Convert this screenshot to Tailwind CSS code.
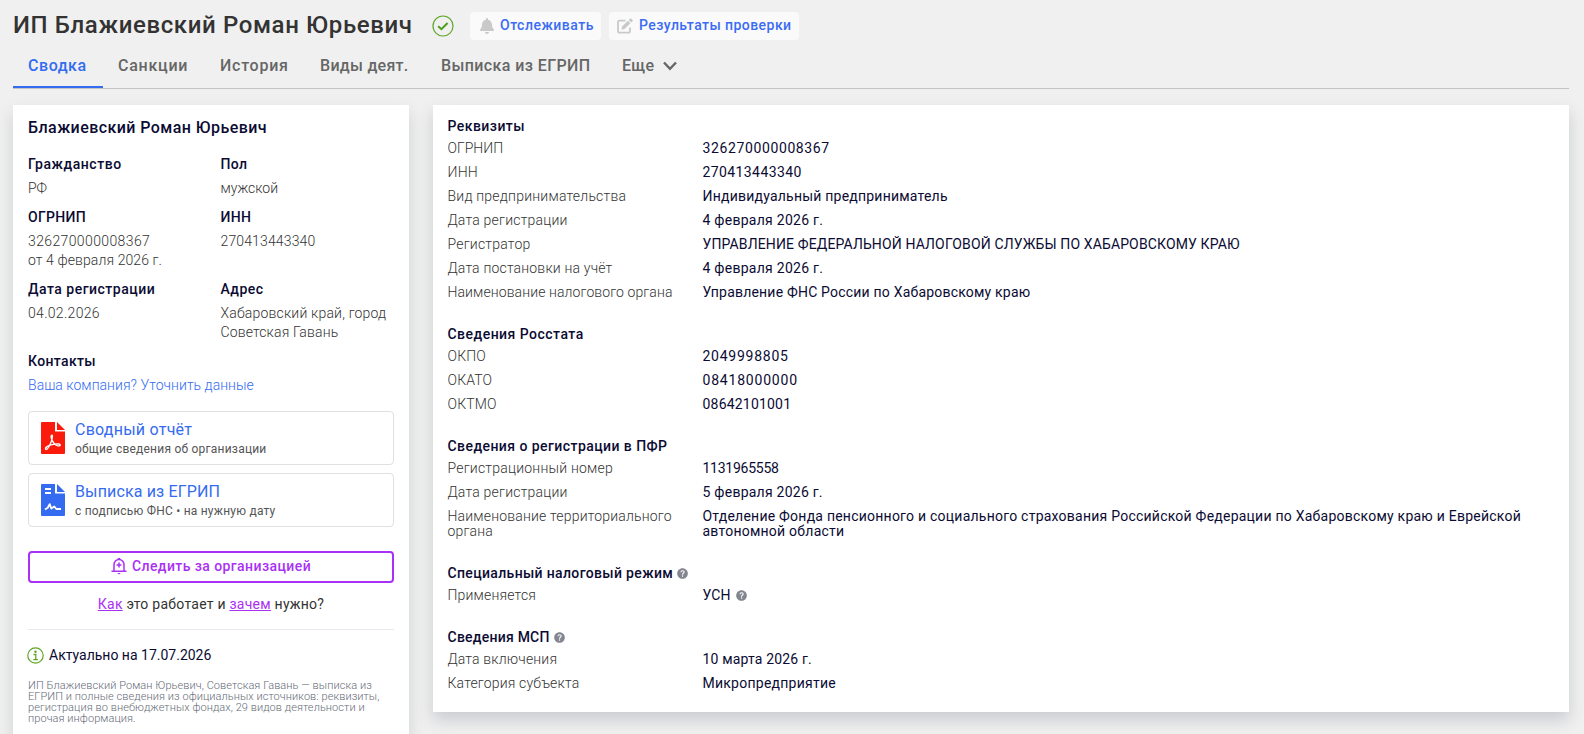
<!DOCTYPE html>
<html lang="ru">

<head>
    <meta charset="UTF-8">
    <title>ИП Блажиевский Роман Юрьевич</title>
    <script src="https://cdn.jsdelivr.net/npm/@tailwindcss/browser@4"></script>
</head>

<body class="h-screen overflow-hidden bg-[#f0f0f0] pl-[13px] pr-[15px] font-['Roboto',sans-serif] text-sm text-[#0b0b33]">
    <svg class="hidden">
        <symbol id="help" viewBox="0 0 512 512">
            <path fill="#838691" d="M504 256c0 137-111 248-248 248S8 393 8 256 119 8 256 8s248 111 248 248z" />
            <path fill="none" stroke="#fff" stroke-width="48" d="M180 196c8-50 36-72 78-72 46 0 78 28 78 66 0 56-78 56-78 110v14" />
            <circle cx="258" cy="376" r="34" fill="#fff" />
        </symbol>
    </svg>

    <header class="flex h-[51px] items-center">
        <h1 class="w-[419px] pb-0.5 text-2xl font-medium tracking-[0.62px] whitespace-nowrap text-[#333]">ИП Блажиевский Роман Юрьевич</h1>
        <svg class="size-[22px] shrink-0" viewBox="0 0 22 22" fill="none">
            <circle cx="11" cy="11" r="10" stroke="#5fa626" stroke-width="1.2" />
            <path d="M6.2 11.2l3.2 3L15.6 8" stroke="#4f9d1a" stroke-width="2" />
        </svg>
        <button class="ml-4 flex h-7 w-[131px] shrink-0 items-center rounded bg-[#fafafa] pl-2.5 font-medium tracking-[0.5px] whitespace-nowrap text-[#3a6cf4]">
            <svg class="mr-1.5 h-4 w-3.5" viewBox="0 0 448 512" fill="#c9c9c9">
                <path d="M224 512c35.300 0 63.900-28.700 63.900-64H160.100c0 35.300 28.600 64 63.900 64zm215.400-149.700c-19.300-20.800-55.500-52-55.500-154.300 0-77.700-54.500-139.900-127.900-155.200V32c0-17.700-14.300-32-32-32s-32 14.300-32 32v20.800C118.600 68.100 64.100 130.300 64.100 208c0 102.300-36.200 133.500-55.500 154.300-6 6.400-8.700 14.200-8.600 21.700.1 16.400 13 32 32.100 32h383.800c19.100 0 32-15.600 32.100-32 .1-7.500-2.600-15.300-8.600-21.700z" />
            </svg>
            <span class="pb-px">Отслеживать</span>
        </button>
        <button class="ml-2 flex h-7 w-[190px] shrink-0 items-center rounded bg-[#fafafa] pl-2 font-medium tracking-[0.45px] whitespace-nowrap text-[#3a6cf4]">
            <svg class="mr-1.5 size-4" viewBox="0 0 16 16" fill="none">
                <path d="M8.500 2.700H2.400a1.400 1.400 0 0 0-1.400 1.400v9.200a1.400 1.400 0 0 0 1.400 1.400h9.200a1.400 1.400 0 0 0 1.400-1.400V9.500" stroke="#c9c9c9" stroke-width="1.800" />
                <path d="M5 8.600L10.900 2.700l2.500 2.500L7.500 11.100l-3 .6zM11.700 1.900l1.100-1.100a1.100 1.100 0 0 1 1.600 0l1 1a1.100 1.100 0 0 1 0 1.600l-1.200 1.100z" fill="#c9c9c9" />
            </svg>
            <span class="pb-px">Результаты проверки</span>
        </button>
    </header>

    <nav class="flex h-[38px] border-b border-[#c4c4c4] text-base leading-[29px] font-medium whitespace-nowrap text-[#666]">
        <a class="w-[90px] border-b-2 border-[#346bf1] pl-[15px] tracking-[0.55px] text-[#346bf1]">Сводка</a>
        <a class="w-[102px] pl-[15px] tracking-[0.75px]">Санкции</a>
        <a class="w-[100px] pl-[15px] tracking-[0.75px]">История</a>
        <a class="w-[121px] pl-[15px] tracking-[0.28px]">Виды деят.</a>
        <a class="w-[181px] pl-[15px] tracking-[0.4px]">Выписка из ЕГРИП</a>
        <a class="flex pl-[15px] tracking-[0.3px]">Еще
            <svg class="mt-2.5 ml-[9px] h-2.5 w-3.5" viewBox="0 0 14 10" fill="none" stroke="#666" stroke-width="2.400">
                <path d="M1 1.500L7 7.800L13 1.500" />
            </svg>
        </a>
    </nav>

    <main class="mt-4 flex h-[629px] items-start gap-6">
        <aside class="h-full w-[396px] shrink-0 bg-white px-[15px] pt-3.5 shadow-[0_8px_15px_rgba(50,60,80,0.17)]">
            <h2 class="text-base leading-[18px] font-medium tracking-[0.43px]">Блажиевский Роман Юрьевич</h2>

            <dl class="mt-[18px] grid grid-cols-[192.500px_1fr] leading-[19px] font-light whitespace-nowrap text-[#333]">
                <div class="h-[53px]">
                    <dt class="mb-[5px] font-medium tracking-[0.55px] text-[#0b0b33]">Гражданство</dt>
                    <dd>РФ</dd>
                </div>
                <div>
                    <dt class="mb-[5px] font-medium tracking-[0.4px] text-[#0b0b33]">Пол</dt>
                    <dd>мужской</dd>
                </div>
                <div class="h-[72px]">
                    <dt class="mb-[5px] font-medium tracking-[0.3px] text-[#0b0b33]">ОГРНИП</dt>
                    <dd class="tracking-[0.38px]">326270000008367</dd>
                    <dd class="tracking-[0.1px]">от 4 февраля 2026 г.</dd>
                </div>
                <div>
                    <dt class="mb-[5px] font-medium tracking-[0.35px] text-[#0b0b33]">ИНН</dt>
                    <dd class="tracking-[0.14px]">270413443340</dd>
                </div>
                <div class="h-[72px]">
                    <dt class="mb-[5px] font-medium tracking-[0.5px] text-[#0b0b33]">Дата регистрации</dt>
                    <dd class="tracking-[0.3px]">04.02.2026</dd>
                </div>
                <div>
                    <dt class="mb-[5px] font-medium tracking-[0.5px] text-[#0b0b33]">Адрес</dt>
                    <dd class="tracking-[0.18px]">Хабаровский край, город</dd>
                    <dd class="tracking-[0.14px]">Советская Гавань</dd>
                </div>
                <div class="h-[59px]">
                    <dt class="mb-[5px] font-medium tracking-[0.35px] text-[#0b0b33]">Контакты</dt>
                    <dd class="tracking-[0.04px] text-[#346bf1]">Ваша компания? Уточнить данные</dd>
                </div>
            </dl>

            <div class="flex flex-col gap-2">
                <a class="flex h-[54px] items-center rounded border border-[#dfe0e2] pl-3">
                    <svg class="mr-2.5 h-8 w-6" viewBox="0 0 24 32">
                        <path fill="#fb1b0c" d="M1 0H14V9.500H24V31a1 1 0 0 1-1 1H1a1 1 0 0 1-1-1V1a1 1 0 0 1 1-1zM16 0l8 8h-8z" />
                        <path fill="none" stroke="#fff" stroke-width="1.400" stroke-linejoin="round" d="M11 13.200c-1.200 0-1 2.200-.2 4.200 1.200 3 3.200 5.400 5.600 6.200 1.600.5 2.800.1 2.800-.6 0-1-2.400-1.300-5.200-.9-3.400.4-7 1.600-8.600 3-1 .9-1.200 2-.5 2.300 1.100.4 3.300-3 4.700-6.200 1.500-3.200 2.300-8 1.400-8z" />
                    </svg>
                    <div class="pt-0.5">
                        <div class="text-base leading-5 tracking-[0.24px] text-[#346bf1]">Сводный отчёт</div>
                        <div class="text-xs leading-[18px] tracking-[0.22px] text-[#555]">общие сведения об организации</div>
                    </div>
                </a>
                <a class="flex h-[54px] items-center rounded border border-[#dfe0e2] pl-3">
                    <svg class="mr-2.5 h-8 w-6" viewBox="0 0 24 32">
                        <path fill="#346bf1" d="M1 0H14V9.500H24V31a1 1 0 0 1-1 1H1a1 1 0 0 1-1-1V1a1 1 0 0 1 1-1zM16 0l8 8h-8z" />
                        <path fill="#fff" d="M4 4h6v2H4zM4 8h6v2H4z" />
                        <path fill="none" stroke="#fff" stroke-width="1.900" stroke-linejoin="round" d="M4 25.500L6.700 23.800 8.700 20.200l1.600 4.300 3-2 2 2.500H20" />
                    </svg>
                    <div class="pt-0.5">
                        <div class="text-base leading-5 tracking-[0.14px] text-[#346bf1]">Выписка из ЕГРИП</div>
                        <div class="text-xs leading-[18px] tracking-[0.22px] text-[#555]">с подписью ФНС • на нужную дату</div>
                    </div>
                </a>
            </div>

            <button class="mt-6 flex h-8 w-full items-center justify-center rounded border-2 border-[#a931f5] pb-0.5 font-medium tracking-[0.42px] text-[#a931f5]">
                <svg class="mr-[5px] h-[18px] w-4" viewBox="0 0 16 18" fill="none" stroke="#a931f5" stroke-width="1.500">
                    <path d="M.500 14.200h15M3 14V7.500a5 5 0 0 1 10 0V14M8 5.500v5M5.500 8h5" />
                    <path d="M6.500 2.300a1.500 1.500 0 0 1 3 0zM6.300 16h3.400L8 17.500z" fill="#a931f5" stroke="none" />
                </svg>
                Следить за организацией
            </button>

            <p class="mt-[11px] text-center leading-5 tracking-[0.25px] text-[#333]"><a class="text-[#a931f5] underline">Как</a> это работает и <a class="text-[#a931f5] underline">зачем</a> нужно?</p>

            <div class="mt-[15px] flex items-center border-t border-[#e9e9f2] pt-4 leading-[18px]">
                <svg class="-ml-px mr-[5px] size-[17px]" viewBox="0 0 17 17" fill="none">
                    <circle cx="8.500" cy="8.500" r="7.700" stroke="#5fa626" stroke-width="1.200" />
                    <path d="M6.500 7.500h2.300v5M6.300 12.700h4.600" stroke="#5fa626" stroke-width="1.300" />
                    <circle cx="8.500" cy="4.700" r="1.200" fill="#5fa626" />
                </svg>
                <span>Актуально на 17.07.2026</span>
            </div>

            <p class="mt-4 text-[11px] leading-[11px] font-light tracking-[0.07px] whitespace-nowrap text-[#666c78]">
                ИП Блажиевский Роман Юрьевич, Советская Гавань — выписка из<br>
                ЕГРИП и полные сведения из официальных источников: реквизиты,<br>
                регистрация во внебюджетных фондах, 29 видов деятельности и<br>
                прочая информация.
            </p>
        </aside>

        <section class="flex h-[607px] grow flex-col gap-[22px] bg-white pt-3.5 pr-[15px] pl-[14.500px] leading-[15px] shadow-[0_8px_15px_rgba(50,60,80,0.2)]">
            <div>
                <h3 class="mb-[3px] font-medium tracking-[0.45px]">Реквизиты</h3>
                <dl class="grid grid-cols-[255px_1fr] gap-y-[9px] pt-1 tracking-[0.22px] [&>dt]:font-light [&>dt]:text-[#333]">
                    <dt class="tracking-normal">ОГРНИП</dt>
                    <dd class="tracking-[0.62px]">326270000008367</dd>
                    <dt>ИНН</dt>
                    <dd class="tracking-[0.4px]">270413443340</dd>
                    <dt>Вид предпринимательства</dt>
                    <dd>Индивидуальный предприниматель</dd>
                    <dt>Дата регистрации</dt>
                    <dd class="tracking-[0.26px]">4 февраля 2026 г.</dd>
                    <dt>Регистратор</dt>
                    <dd class="tracking-[0.13px]">УПРАВЛЕНИЕ ФЕДЕРАЛЬНОЙ НАЛОГОВОЙ СЛУЖБЫ ПО ХАБАРОВСКОМУ КРАЮ</dd>
                    <dt class="tracking-[0.18px]">Дата постановки на учёт</dt>
                    <dd class="tracking-[0.26px]">4 февраля 2026 г.</dd>
                    <dt class="tracking-[0.1px]">Наименование налогового органа</dt>
                    <dd class="tracking-[0.2px]">Управление ФНС России по Хабаровскому краю</dd>
                </dl>
            </div>
            <div class="mt-[5px]">
                <h3 class="mb-[3px] font-medium tracking-[0.48px]">Сведения Росстата</h3>
                <dl class="grid grid-cols-[255px_1fr] gap-y-[9px] pt-1 tracking-[0.15px] [&>dt]:font-light [&>dt]:text-[#333]">
                    <dt>ОКПО</dt>
                    <dd class="tracking-[0.75px]">2049998805</dd>
                    <dt>ОКАТО</dt>
                    <dd class="tracking-[0.8px]">08418000000</dd>
                    <dt>ОКТМО</dt>
                    <dd class="tracking-[0.2px]">08642101001</dd>
                </dl>
            </div>
            <div class="mt-[5px]">
                <h3 class="mb-[3px] font-medium tracking-[0.44px]">Сведения о регистрации в ПФР</h3>
                <dl class="grid grid-cols-[255px_1fr] gap-y-[9px] pt-1 tracking-[0.22px] [&>dt]:font-light [&>dt]:text-[#333]">
                    <dt>Регистрационный номер</dt>
                    <dd class="tracking-[-0.25px]">1131965558</dd>
                    <dt>Дата регистрации</dt>
                    <dd class="tracking-[0.24px]">5 февраля 2026 г.</dd>
                    <dt class="tracking-[0.18px]">Наименование территориального<br>органа</dt>
                    <dd class="tracking-[0.235px]">Отделение Фонда пенсионного и социального страхования Российской Федерации по Хабаровскому краю и Еврейской<br>автономной области</dd>
                </dl>
            </div>
            <div class="mt-[5px]">
                <h3 class="mb-[3px] flex items-center font-medium tracking-[0.35px]">Специальный налоговый режим
                    <svg class="ml-1 size-[11px]"><use href="#help" /></svg>
                </h3>
                <dl class="grid grid-cols-[255px_1fr] gap-y-[9px] pt-1 tracking-[0.18px] [&>dt]:font-light [&>dt]:text-[#333]">
                    <dt>Применяется</dt>
                    <dd class="flex items-center">УСН
                        <svg class="ml-[5px] size-[11px]"><use href="#help" /></svg>
                    </dd>
                </dl>
            </div>
            <div class="mt-[5px]">
                <h3 class="mb-[3px] flex items-center font-medium tracking-[0.24px]">Сведения МСП
                    <svg class="ml-1 size-[11px]"><use href="#help" /></svg>
                </h3>
                <dl class="grid grid-cols-[255px_1fr] gap-y-[9px] pt-1 tracking-[0.16px] [&>dt]:font-light [&>dt]:text-[#333]">
                    <dt>Дата включения</dt>
                    <dd>10 марта 2026 г.</dd>
                    <dt>Категория субъекта</dt>
                    <dd class="tracking-[0.25px]">Микропредприятие</dd>
                </dl>
            </div>
        </section>
    </main>
</body>

</html>
